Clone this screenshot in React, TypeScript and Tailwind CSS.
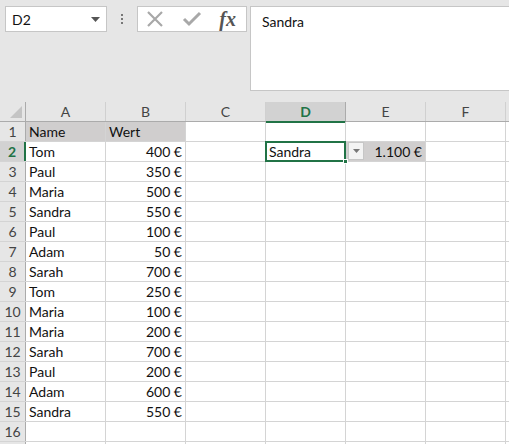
import React from "react";

const rows: [string, string][] = [
  ["Name", "Wert"],
  ["Tom", "400 €"],
  ["Paul", "350 €"],
  ["Maria", "500 €"],
  ["Sandra", "550 €"],
  ["Paul", "100 €"],
  ["Adam", "50 €"],
  ["Sarah", "700 €"],
  ["Tom", "250 €"],
  ["Maria", "100 €"],
  ["Maria", "200 €"],
  ["Sarah", "700 €"],
  ["Paul", "200 €"],
  ["Adam", "600 €"],
  ["Sandra", "550 €"],
  ["", ""],
  ["", ""],
];

const cols = ["A", "B", "C", "D", "E", "F"];

export default function App() {
  return (
    <div
      className="w-[509px] h-[444px] overflow-hidden bg-[#e6e6e6] flex flex-col text-[#111]"
      style={{ fontFamily: "Lato, 'Liberation Sans', sans-serif" }}
    >
      {/* Formula bar area */}
      <div className="h-[102px] shrink-0 flex items-start pt-[6px] pl-[5px]">
        <div className="w-[102px] h-[26px] bg-white border border-[#c6c6c6] flex items-center justify-between pl-[6px] pr-[6px] text-[14px]">
          <span>D2</span>
          <svg width="9" height="5" viewBox="0 0 9 5">
            <path d="M0 0 L9 0 L4.5 5 Z" fill="#555" />
          </svg>
        </div>
        <div className="w-[30px] h-[26px] flex flex-col items-center justify-center gap-[2px]">
          <div className="w-[2px] h-[2px] bg-[#777]" />
          <div className="w-[2px] h-[2px] bg-[#777]" />
          <div className="w-[2px] h-[2px] bg-[#777]" />
        </div>
        <div className="w-[110px] h-[26px] bg-white border border-[#c6c6c6] flex items-center justify-between px-[8px]">
          <svg width="18" height="16" viewBox="0 0 18 16">
            <path d="M2 1 L16 15 M16 1 L2 15" stroke="#a8a8a8" strokeWidth="2.2" fill="none" />
          </svg>
          <svg width="20" height="16" viewBox="0 0 20 16">
            <path d="M2 8 L7 13 L18 2" stroke="#a8a8a8" strokeWidth="3" fill="none" />
          </svg>
          <span
            className="text-[20px] italic font-bold text-[#555] leading-none pr-[2px]"
            style={{ fontFamily: "'Liberation Serif', serif" }}
          >
            fx
          </span>
        </div>
        <div className="ml-[3px] flex-1 h-[85px] bg-white border border-[#c6c6c6] border-r-0 pl-[11px] pt-[4px] text-[14px]">
          Sandra
        </div>
      </div>

      {/* Grid */}
      <div className="flex flex-col bg-white">
        {/* Column header */}
        <div className="flex h-[20px] bg-[#e6e6e6] border-b border-[#ababab]">
          <div className="w-[26px] shrink-0 border-r border-[#ababab] relative">
            <svg className="absolute right-[3px] bottom-[3px]" width="12" height="12" viewBox="0 0 12 12">
              <path d="M12 0 L12 12 L0 12 Z" fill="#c4c4c4" />
            </svg>
          </div>
          {cols.map((c) =>
            c === "D" ? (
              <div
                key={c}
                className="w-[80px] shrink-0 border-r border-[#ababab] bg-[#d2d2d2] flex items-center justify-center text-[14px] font-bold text-[#217346] border-b-2 border-b-[#217346] h-[21px]"
              >
                {c}
              </div>
            ) : (
              <div
                key={c}
                className="w-[80px] shrink-0 border-r border-[#d0d0d0] flex items-center justify-center text-[14px] text-[#444]"
              >
                {c}
              </div>
            )
          )}
          <div className="flex-1" />
        </div>
        {rows.map((r, i) => {
          const n = i + 1;
          const sel = n === 2;
          return (
            <div key={n} className="flex h-[20px] border-b border-[#d4d4d4] text-[14px]">
              <div
                className={
                  sel
                    ? "w-[26px] shrink-0 bg-[#d2d2d2] border-r-2 border-[#217346] flex items-center justify-center font-bold text-[#217346]"
                    : "w-[26px] shrink-0 bg-[#e6e6e6] border-r border-[#ababab] flex items-center justify-center text-[#444]"
                }
              >
                {n <= 16 ? n : ""}
              </div>
              <div
                className={
                  "w-[80px] shrink-0 border-r border-[#d4d4d4] flex items-center pl-[3px] " +
                  (n === 1 ? "bg-[#d0cece]" : "")
                }
              >
                {r[0]}
              </div>
              <div
                className={
                  n === 1
                    ? "w-[80px] shrink-0 border-r border-[#d4d4d4] flex items-center pl-[3px] bg-[#d0cece]"
                    : "w-[80px] shrink-0 border-r border-[#d4d4d4] flex items-center justify-end pr-[3px]"
                }
              >
                {r[1]}
              </div>
              <div className="w-[80px] shrink-0 border-r border-[#d4d4d4]" />
              {sel ? (
                <div className="w-[80px] shrink-0 border-r border-[#d4d4d4] relative">
                  <div className="absolute left-[-1px] top-[-1px] w-[81px] h-[21px] border-2 border-[#217346] flex items-center pl-[2px] bg-white z-10">
                    Sandra
                  </div>
                  <div className="absolute right-[-3px] bottom-[-3px] w-[5px] h-[5px] bg-[#217346] border border-white z-20" />
                </div>
              ) : (
                <div className="w-[80px] shrink-0 border-r border-[#d4d4d4]" />
              )}
              {sel ? (
                <div className="w-[80px] shrink-0 border-r border-[#d4d4d4] bg-[#d0cece] flex items-center justify-end pr-[3px] relative">
                  <div className="absolute left-[2px] top-0 w-[16px] h-[18px] bg-[#f3f3f3] border border-[#c6c6c6] flex items-center justify-center z-10">
                    <svg width="7" height="4" viewBox="0 0 7 4">
                      <path d="M0 0 L7 0 L3.5 4 Z" fill="#777" />
                    </svg>
                  </div>
                  1.100 €
                </div>
              ) : (
                <div className="w-[80px] shrink-0 border-r border-[#d4d4d4]" />
              )}
              <div className="w-[80px] shrink-0 border-r border-[#d4d4d4]" />
              <div className="flex-1" />
            </div>
          );
        })}
      </div>
    </div>
  );
}
